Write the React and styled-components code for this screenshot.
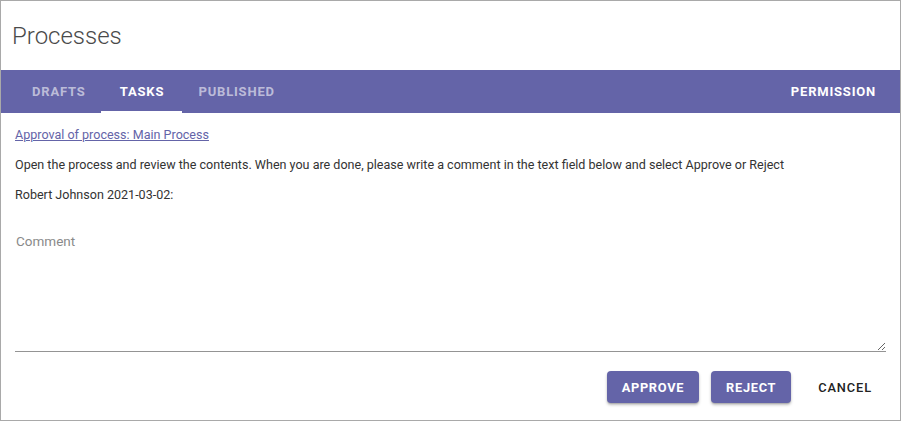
import React, { useState } from 'react'
import styled, { createGlobalStyle } from 'styled-components'

const GlobalStyle = createGlobalStyle`
  html, body {
    margin: 0;
    padding: 0;
    background: #fff;
  }
  body {
    font-family: Roboto, "Liberation Sans", Arial, sans-serif;
  }
  * {
    box-sizing: border-box;
  }
`

const PRIMARY = '#6464a8'

const Frame = styled.div`
  width: 901px;
  height: 421px;
  border: 1px solid #a9a9a9;
  display: flex;
  flex-direction: column;
  overflow: hidden;
`

const Header = styled.header`
  height: 69px;
  display: flex;
  align-items: center;
  padding: 0 11px;
`

const Title = styled.h1`
  margin: 0;
  font-size: 24px;
  font-weight: 300;
  color: #4a4a4a;
`

const TabBar = styled.nav`
  height: 43px;
  background: ${PRIMARY};
  display: flex;
  align-items: stretch;
  padding: 0 24px 0 14px;
`

const TabList = styled.div`
  display: flex;
  flex: 1;
`

const Tab = styled.button`
  position: relative;
  background: none;
  border: none;
  padding: 0 15px 0 17px;
  min-width: 81px;
  font-family: inherit;
  font-size: 13px;
  font-weight: 700;
  letter-spacing: 0.8px;
  text-transform: uppercase;
  color: ${p => (p.$active ? '#fff' : 'rgba(255, 255, 255, 0.58)')};
  cursor: pointer;

  &::after {
    content: '';
    position: absolute;
    left: 0;
    right: 0;
    bottom: 0;
    height: 2px;
    background: ${p => (p.$active ? '#fff' : 'transparent')};
  }
`

const SideAction = styled.button`
  background: none;
  border: none;
  padding: 0;
  font-family: inherit;
  font-size: 13px;
  font-weight: 700;
  letter-spacing: 0.8px;
  color: #fff;
  cursor: pointer;
`

const Content = styled.main`
  flex: 1;
  display: flex;
  flex-direction: column;
  padding: 14px 14px 0 14px;
`

const Line = styled.p`
  margin: 0 0 15px;
  font-size: 12.55px;
  line-height: 15px;
  color: #333;
`

const ProcessLink = styled.a`
  color: ${PRIMARY};
  text-decoration: underline;
  font-size: 12.55px;
  line-height: 15px;
  margin-bottom: 15px;
  align-self: flex-start;
  cursor: pointer;
`

const CommentField = styled.textarea`
  margin-top: 9px;
  height: 126px;
  width: 100%;
  border: none;
  border-bottom: 1px solid #949494;
  padding: 7px 1px;
  font-family: inherit;
  font-size: 13.5px;
  color: #333;
  resize: vertical;
  outline: none;

  &::placeholder {
    color: #8a8a8a;
  }
`

const Actions = styled.div`
  display: flex;
  justify-content: flex-end;
  align-items: center;
  gap: 12px;
  margin-top: 19px;
  margin-right: -1px;
`

const Button = styled.button`
  height: 32px;
  padding: 0 15px;
  border: none;
  border-radius: 4px;
  font-family: inherit;
  font-size: 12.8px;
  letter-spacing: ${p => (p.$flat ? '0.9px' : '0.7px')};
  background: ${p => (p.$flat ? 'transparent' : PRIMARY)};
  color: ${p => (p.$flat ? '#222' : '#fff')};
  font-weight: ${p => (p.$flat ? 500 : 700)};
  box-shadow: ${p =>
    p.$flat ? 'none' : '0 2px 3px rgba(0, 0, 0, 0.25), 0 1px 1px rgba(0, 0, 0, 0.12)'};
  cursor: pointer;
`

const TABS = ['Drafts', 'Tasks', 'Published']

export default function App() {
  const [active, setActive] = useState('Tasks')
  const [comment, setComment] = useState('')

  return (
    <>
      <GlobalStyle />
      <Frame>
        <Header>
          <Title>Processes</Title>
        </Header>
        <TabBar>
          <TabList>
            {TABS.map(tab => (
              <Tab key={tab} $active={tab === active} onClick={() => setActive(tab)}>
                {tab}
              </Tab>
            ))}
          </TabList>
          <SideAction>PERMISSION</SideAction>
        </TabBar>
        <Content>
          <ProcessLink>Approval of process: Main Process</ProcessLink>
          <Line>
            Open the process and review the contents. When you are done, please write a comment in
            the text field below and select Approve or Reject
          </Line>
          <Line>Robert Johnson 2021-03-02:</Line>
          <CommentField
            placeholder="Comment"
            value={comment}
            onChange={e => setComment(e.target.value)}
          />
          <Actions>
            <Button>APPROVE</Button>
            <Button>REJECT</Button>
            <Button $flat>CANCEL</Button>
          </Actions>
        </Content>
      </Frame>
    </>
  )
}
